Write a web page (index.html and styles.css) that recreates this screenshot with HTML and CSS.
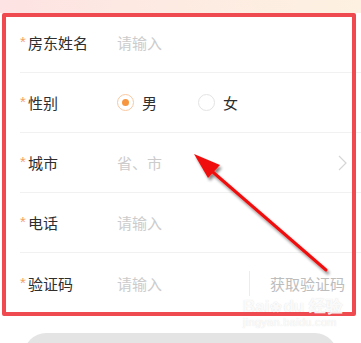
FILE: index.html
```html
<!DOCTYPE html>
<html lang="zh">
<head>
<meta charset="utf-8">
<link rel="stylesheet" href="styles.css">
</head>
<body>
<div class="page">
  <div class="top"></div>
  <div class="card">
    <div class="row">
      <div class="label"><span class="star">*</span>房东姓名</div>
      <div class="ph">请输入</div>
    </div>
    <div class="row">
      <div class="label"><span class="star">*</span>性别</div>
      <div class="radios">
        <div class="radio on"><span class="dot"></span><span class="rtext">男</span></div>
        <div class="radio"><span class="dot"></span><span class="rtext">女</span></div>
      </div>
    </div>
    <div class="row">
      <div class="label"><span class="star">*</span>城市</div>
      <div class="ph grow">省、市</div>
      <svg class="chev" width="9" height="16" viewBox="0 0 9 16"><path d="M1 1 L8 8 L1 15" fill="none" stroke="#d6d6d6" stroke-width="1.2"/></svg>
    </div>
    <div class="row">
      <div class="label"><span class="star">*</span>电话</div>
      <div class="ph">请输入</div>
    </div>
    <div class="row last">
      <div class="label"><span class="star">*</span>验证码</div>
      <div class="ph grow">请输入</div>
      <div class="vdiv"></div>
      <div class="code">获取验证码</div>
    </div>
  </div>
  <div class="btn"></div>

  <div class="redbox"></div>
  <svg class="arrow" width="361" height="343" viewBox="0 0 361 343">
    <defs>
      <filter id="sh" x="-20%" y="-20%" width="140%" height="140%">
        <feGaussianBlur in="SourceAlpha" stdDeviation="1.5"/>
        <feOffset dx="2" dy="3" result="b"/>
        <feComponentTransfer><feFuncA type="linear" slope="0.45"/></feComponentTransfer>
        <feMerge><feMergeNode/><feMergeNode in="SourceGraphic"/></feMerge>
      </filter>
    </defs>
    <g filter="url(#sh)">
      <line x1="207" y1="167" x2="326" y2="270" stroke="#f01010" stroke-width="3" stroke-linecap="round"/>
      <path d="M194 154 L220 165 L208 178 Z" fill="#f01010"/>
    </g>
  </svg>
  <div class="wm">
    <div class="wm1">Bai<span class="paw">❀</span>du 经验</div>
    <div class="wm2">jingyan.baidu.com</div>
  </div>
</div>
</body>
</html>
```
FILE: styles.css
```css
* { box-sizing: border-box; margin: 0; padding: 0; }
html, body { width: 361px; height: 343px; overflow: hidden; background: #ffffff; }
body { font-family: "Noto Sans CJK SC", "Noto Sans", sans-serif; }
.page { position: relative; width: 361px; height: 343px; overflow: hidden; }
.top { height: 13px; background: linear-gradient(90deg, #fde3e3 0%, #fdebe2 50%, #fdf1e1 100%); }
.card { background: #ffffff; padding-left: 20px; }
.row {
  height: 60px;
  display: flex;
  align-items: center;
  border-bottom: 1px solid #f1f1f1;
  padding-right: 14px;
}
.row.last { border-bottom: none; padding-right: 16px; }
.label { width: 97px; font-size: 15px; color: #2e2e2e; display: flex; align-items: center; }
.star { color: #f5a25e; font-size: 15px; width: 8px; align-self: flex-start; line-height: 15px; margin-top: 2px; font-family: "Liberation Sans", sans-serif; }
.ph { font-size: 15px; color: #cccccc; }
.grow { flex: 1; }
.radios { display: flex; align-items: center; }
.radio { display: flex; align-items: center; width: 81px; }
.dot {
  width: 17px; height: 17px; border-radius: 50%;
  border: 1px solid #e3e3e3;
  display: flex; align-items: center; justify-content: center;
}
.radio.on .dot { border-color: #f9c8a0; }
.radio.on .dot::after { content: ""; width: 7px; height: 7px; border-radius: 50%; background: #f79640; }
.rtext { margin-left: 8px; font-size: 15px; color: #2e2e2e; }
.chev { display: block; }
.vdiv { width: 1px; height: 25px; background: #ececec; margin-right: 20px; }
.code { font-size: 15px; color: #bdbdbd; }
.btn { margin: 20px 24px 0; height: 44px; border-radius: 22px; background: #e4e4e4; }
.redbox {
  position: absolute; left: 2px; top: 13px; width: 354px; height: 303px;
  border: 4px solid #ef4a50; border-radius: 2px;
}
.arrow { position: absolute; left: 0; top: 0; }
.wm { position: absolute; left: 243px; top: 298px; color: rgba(255,255,255,0.9); text-shadow: 0 0 1px rgba(150,150,150,0.35); }
.wm1 { font-family: "Liberation Sans", sans-serif; font-size: 17px; font-weight: bold; line-height: 18px; }
.paw { font-size: 14px; margin: 0 1px; }
.wm2 { font-family: "Liberation Sans", sans-serif; font-size: 11px; line-height: 13px; letter-spacing: 0.3px; }
```
